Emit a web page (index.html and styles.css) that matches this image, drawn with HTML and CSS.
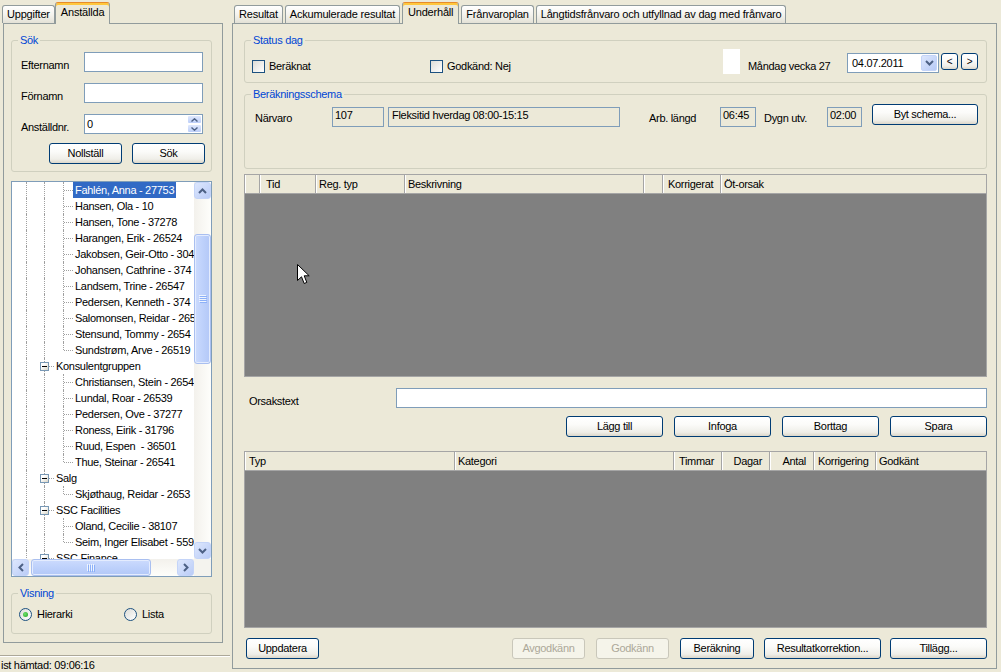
FILE: index.html
```html
<!DOCTYPE html>
<html lang="sv">
<head>
<meta charset="utf-8">
<title>Underhåll</title>
<link rel="stylesheet" href="styles.css">
</head>
<body>
<div class="app">
  <div class="left">
    <div class="tabs">
      <div class="tab">Uppgifter</div>
      <div class="tab active">Anställda</div>
    </div>
    <div class="page lpage">
      <fieldset class="group sok">
        <legend>Sök</legend>
        <div class="frow"><span class="flabel">Efternamn</span><div class="tb"></div></div>
        <div class="frow"><span class="flabel">Förnamn</span><div class="tb"></div></div>
        <div class="frow"><span class="flabel">Anställdnr.</span>
          <div class="tb num"><span class="numval">0</span>
            <span class="spin">
              <span class="sb"><svg width="7" height="4" viewBox="0 0 7 4"><path d="M0.5 3.5 L3.5 0.8 L6.5 3.5" stroke="#4D6185" stroke-width="1.4" fill="none"/></svg></span>
              <span class="sb"><svg width="7" height="4" viewBox="0 0 7 4"><path d="M0.5 0.5 L3.5 3.2 L6.5 0.5" stroke="#4D6185" stroke-width="1.4" fill="none"/></svg></span>
            </span>
          </div>
        </div>
        <div class="brow"><button class="btn w73">Nollställ</button><button class="btn w73">Sök</button></div>
      </fieldset>

      <div class="tree">
        <div class="tree-main">
          <div class="tree-items">
            <div class="ti"><span class="c c1 v"></span><span class="c v"></span><span class="c t"></span><span class="tx sel">Fahlén, Anna - 27753</span></div>
            <div class="ti"><span class="c c1 v"></span><span class="c v"></span><span class="c t"></span><span class="tx">Hansen, Ola - 10</span></div>
            <div class="ti"><span class="c c1 v"></span><span class="c v"></span><span class="c t"></span><span class="tx">Hansen, Tone - 37278</span></div>
            <div class="ti"><span class="c c1 v"></span><span class="c v"></span><span class="c t"></span><span class="tx">Harangen, Erik - 26524</span></div>
            <div class="ti"><span class="c c1 v"></span><span class="c v"></span><span class="c t"></span><span class="tx">Jakobsen, Geir-Otto - 304</span></div>
            <div class="ti"><span class="c c1 v"></span><span class="c v"></span><span class="c t"></span><span class="tx">Johansen, Cathrine - 374</span></div>
            <div class="ti"><span class="c c1 v"></span><span class="c v"></span><span class="c t"></span><span class="tx">Landsem, Trine - 26547</span></div>
            <div class="ti"><span class="c c1 v"></span><span class="c v"></span><span class="c t"></span><span class="tx">Pedersen, Kenneth - 374</span></div>
            <div class="ti"><span class="c c1 v"></span><span class="c v"></span><span class="c t"></span><span class="tx">Salomonsen, Reidar - 265</span></div>
            <div class="ti"><span class="c c1 v"></span><span class="c v"></span><span class="c t"></span><span class="tx">Stensund, Tommy - 2654</span></div>
            <div class="ti"><span class="c c1 v"></span><span class="c v"></span><span class="c l"></span><span class="tx">Sundstrøm, Arve - 26519</span></div>
            <div class="ti"><span class="c c1 v"></span><span class="c g"><span class="box"></span></span><span class="tx">Konsulentgruppen</span></div>
            <div class="ti"><span class="c c1 v"></span><span class="c v"></span><span class="c t"></span><span class="tx">Christiansen, Stein - 2654</span></div>
            <div class="ti"><span class="c c1 v"></span><span class="c v"></span><span class="c t"></span><span class="tx">Lundal, Roar - 26539</span></div>
            <div class="ti"><span class="c c1 v"></span><span class="c v"></span><span class="c t"></span><span class="tx">Pedersen, Ove - 37277</span></div>
            <div class="ti"><span class="c c1 v"></span><span class="c v"></span><span class="c t"></span><span class="tx">Roness, Eirik - 31796</span></div>
            <div class="ti"><span class="c c1 v"></span><span class="c v"></span><span class="c t"></span><span class="tx">Ruud, Espen  - 36501</span></div>
            <div class="ti"><span class="c c1 v"></span><span class="c v"></span><span class="c l"></span><span class="tx">Thue, Steinar - 26541</span></div>
            <div class="ti"><span class="c c1 v"></span><span class="c g"><span class="box"></span></span><span class="tx">Salg</span></div>
            <div class="ti"><span class="c c1 v"></span><span class="c v"></span><span class="c l"></span><span class="tx">Skjøthaug, Reidar - 2653</span></div>
            <div class="ti"><span class="c c1 v"></span><span class="c g"><span class="box"></span></span><span class="tx">SSC Facilities</span></div>
            <div class="ti"><span class="c c1 v"></span><span class="c v"></span><span class="c t"></span><span class="tx">Oland, Cecilie - 38107</span></div>
            <div class="ti"><span class="c c1 v"></span><span class="c v"></span><span class="c l"></span><span class="tx">Seim, Inger Elisabet - 559</span></div>
            <div class="ti"><span class="c c1 v"></span><span class="c g"><span class="box"></span></span><span class="tx">SSC Finance</span></div>
          </div>
          <div class="vscroll">
            <span class="sbtn"><svg width="9" height="6" viewBox="0 0 9 6"><path d="M1 5 L4.5 1.5 L8 5" stroke="#4D6185" stroke-width="2" fill="none"/></svg></span>
            <div class="vtrack">
              <div class="vthumb"><svg width="8" height="8" viewBox="0 0 8 8"><path d="M0 0.5H7M0 2.5H7M0 4.5H7M0 6.5H7" stroke="#EEF4FE" stroke-width="1"/><path d="M1 1.5H8M1 3.5H8M1 5.5H8M1 7.5H8" stroke="#8CB0F8" stroke-width="1"/></svg></div>
            </div>
            <span class="sbtn"><svg width="9" height="6" viewBox="0 0 9 6"><path d="M1 1 L4.5 4.5 L8 1" stroke="#4D6185" stroke-width="2" fill="none"/></svg></span>
          </div>
        </div>
        <div class="hscroll">
          <span class="sbtn"><svg width="6" height="9" viewBox="0 0 6 9"><path d="M5 1 L1.5 4.5 L5 8" stroke="#4D6185" stroke-width="2" fill="none"/></svg></span>
          <div class="htrack">
            <div class="hthumb"><svg width="8" height="8" viewBox="0 0 8 8"><path d="M0.5 0V7M2.5 0V7M4.5 0V7M6.5 0V7" stroke="#EEF4FE" stroke-width="1"/><path d="M1.5 1V8M3.5 1V8M5.5 1V8M7.5 1V8" stroke="#8CB0F8" stroke-width="1"/></svg></div>
          </div>
          <span class="sbtn"><svg width="6" height="9" viewBox="0 0 6 9"><path d="M1 1 L4.5 4.5 L1 8" stroke="#4D6185" stroke-width="2" fill="none"/></svg></span>
          <span class="corner"></span>
        </div>
      </div>

      <fieldset class="group visning">
        <legend>Visning</legend>
        <div class="rrow">
          <span class="ropt hier"><span class="radio on"></span>Hierarki</span>
          <span class="ropt"><span class="radio"></span>Lista</span>
        </div>
      </fieldset>
    </div>
    <div class="status">ist hämtad: 09:06:16</div>
  </div>

  <div class="right">
    <div class="tabs rtabs">
      <div class="tab">Resultat</div>
      <div class="tab">Ackumulerade resultat</div>
      <div class="tab active">Underhåll</div>
      <div class="tab">Frånvaroplan</div>
      <div class="tab">Långtidsfrånvaro och utfyllnad av dag med frånvaro</div>
    </div>
    <div class="page rpage">
      <fieldset class="group sd">
        <legend>Status dag</legend>
        <div class="sdrow">
          <span class="chk first"><span class="cb"></span>Beräknat</span>
          <span class="chk"><span class="cb"></span>Godkänd: Nej</span>
          <span class="colorbox"></span>
          <span class="daylabel">Måndag vecka 27</span>
          <span class="combo"><span class="cval">04.07.2011</span><span class="dd"><svg width="9" height="6" viewBox="0 0 9 6"><path d="M1 1 L4.5 4.5 L8 1" stroke="#4D6185" stroke-width="2" fill="none"/></svg></span></span>
          <button class="btn nav">&lt;</button>
          <button class="btn nav nav2">&gt;</button>
        </div>
      </fieldset>

      <fieldset class="group schema">
        <legend>Beräkningsschema</legend>
        <div class="scrow">
          <span class="slabel s-narvaro">Närvaro</span>
          <span class="ro w52">107</span>
          <span class="ro w232">Fleksitid hverdag 08:00-15:15</span>
          <span class="slabel s-arb">Arb. längd</span>
          <span class="ro w36">06:45</span>
          <span class="slabel s-dygn">Dygn utv.</span>
          <span class="ro w35">02:00</span>
          <button class="btn byt">Byt schema...</button>
        </div>
      </fieldset>

      <div class="grid g1">
        <div class="gh">
          <span class="hc rh"></span>
          <span class="hc h-tid">Tid</span>
          <span class="hc h-reg">Reg. typ</span>
          <span class="hc h-besk">Beskrivning</span>
          <span class="hc h-blank"></span>
          <span class="hc h-korr">Korrigerat</span>
          <span class="hc fill">Öt-orsak</span>
        </div>
        <svg class="cursor" width="13" height="21" viewBox="0 0 13 21"><path d="M0.5 0.5 V16.5 L4.5 12.8 L7.2 19.5 L9.8 18.4 L7.2 11.8 H12.2 Z" fill="#FFFFFF" stroke="#000000" stroke-width="1" stroke-linejoin="miter"/></svg>
      </div>

      <div class="orow">
        <span class="olabel">Orsakstext</span>
        <span class="oinput"></span>
      </div>

      <div class="arow">
        <button class="btn">Lägg till</button>
        <button class="btn">Infoga</button>
        <button class="btn">Borttag</button>
        <button class="btn">Spara</button>
      </div>

      <div class="grid g2">
        <div class="gh">
          <span class="hc h-typ">Typ</span>
          <span class="hc h-kat">Kategori</span>
          <span class="hc h-tim num">Timmar</span>
          <span class="hc h-dag num">Dagar</span>
          <span class="hc h-ant num">Antal</span>
          <span class="hc h-kor">Korrigering</span>
          <span class="hc fill">Godkänt</span>
        </div>
      </div>

      <div class="brow2">
        <button class="btn b-upd">Uppdatera</button>
        <button class="btn dis b-avg">Avgodkänn</button>
        <button class="btn dis b-god">Godkänn</button>
        <button class="btn b-ber">Beräkning</button>
        <button class="btn b-res">Resultatkorrektion...</button>
        <button class="btn b-til">Tillägg...</button>
      </div>
    </div>
  </div>
</div>
</body>
</html>
```

FILE: styles.css
```css
* { box-sizing: border-box; }
html, body { margin: 0; padding: 0; }
body {
  width: 1001px;
  height: 672px;
  overflow: hidden;
  background: #ECE9D8;
  font-family: "Liberation Sans", Arial, sans-serif;
  font-size: 11px;
  line-height: 13px;
  letter-spacing: -0.3px;
  color: #000;
}
button { font: inherit; letter-spacing: inherit; color: inherit; margin: 0; padding: 0; }

.app { display: flex; height: 672px; }
.left { width: 230px; flex: none; display: flex; flex-direction: column; }
.right { flex: 1; min-width: 0; padding: 0 4px 0 2px; display: flex; flex-direction: column; }

/* ---------- tabs ---------- */
.tabs { height: 23px; display: flex; align-items: flex-end; padding-left: 2px; position: relative; z-index: 1; flex: none; }
.tab {
  height: 18px;
  padding: 0 4px;
  border: 1px solid #919B9C;
  border-bottom: 0;
  border-radius: 3px 3px 0 0;
  background: linear-gradient(#FFFFFF, #F4F3EE 50%, #E3E1D6);
  display: flex;
  align-items: center;
  white-space: nowrap;
  flex: none;
  letter-spacing: -0.2px;
}
.rtabs .tab { margin-right: 2px; }
.tab.active {
  height: 22px;
  margin-bottom: -1px;
  background: #ECE9D8;
  border-top: 1px solid #E68B2C;
  box-shadow: inset 0 2px 0 #FFC73C;
  padding: 0 5px 2px;
}

.page { background: #ECE9D8; border: 1px solid #919B9C; flex: none; }
.lpage { width: 220px; height: 620px; margin-left: 3px; padding: 10px 10px 0 7px; }
.rpage { height: 646px; padding: 10px 9px 9px 11px; display: flex; flex-direction: column; }

/* ---------- group boxes ---------- */
.group { margin: 0; padding: 0; border: 1px solid #D0D0BF; border-radius: 3px; min-width: 0; }
.group legend { color: #0046D5; padding: 0 2px; line-height: 13px; }

/* ---------- search ---------- */
.sok { padding: 5px 8px 7px 9px; }
.sok legend { margin-left: -3px; }
.frow { display: flex; align-items: flex-end; height: 20px; }
.frow + .frow { margin-top: 11px; }
.flabel { width: 63px; flex: none; }
.tb { width: 119px; height: 20px; border: 1px solid #7F9DB9; background: #FFFFFF; flex: none; }
.tb.num { display: flex; align-items: center; padding-left: 2px; }
.spin { margin-left: auto; width: 15px; height: 18px; display: flex; flex-direction: column; }
.sb {
  flex: 1;
  display: flex; align-items: center; justify-content: center;
  background: linear-gradient(#DFE8FD, #BCCEF8);
  border: 1px solid #FFFFFF;
  border-radius: 2px;
}
.brow { display: flex; justify-content: flex-end; gap: 10px; margin-top: 9px; margin-right: -2px; }
.w73 { width: 73px; }

/* ---------- buttons ---------- */
.btn {
  height: 21px;
  border: 1px solid #003C74;
  border-radius: 3px;
  background: linear-gradient(#FFFFFF 0%, #FBFBF9 40%, #EFEEE8 80%, #DCD7CA 100%);
  display: flex; align-items: center; justify-content: center;
  white-space: nowrap;
  flex: none;
}
.btn.dis { border-color: #C9C7BA; color: #ACA899; background: #F5F4EA; }

/* ---------- tree ---------- */
.tree { margin-top: 9px; height: 396px; border: 1px solid #7F9DB9; background: #FFFFFF; display: flex; flex-direction: column; }
.tree-main { display: flex; height: 377px; flex: none; }
.tree-items { flex: 1; min-width: 0; overflow: hidden; }
.ti { display: flex; height: 16px; padding-left: 5px; white-space: nowrap; }
.c { flex: none; width: 19px; height: 16px; position: relative; }
.c1 { width: 18px; }
.c.v::before, .c.t::before, .c.l::before, .c.g::before {
  content: ""; position: absolute; left: 9px; top: 0; bottom: 0; border-left: 1px dotted #A0A0A0;
}
.c.l::before { bottom: 8px; }
.c.t::after, .c.l::after, .c.g::after {
  content: ""; position: absolute; left: 10px; right: 0; top: 8px; border-top: 1px dotted #A0A0A0;
}
.c.g::after { left: 14px; }
.box {
  position: absolute; left: 5px; top: 4px; width: 9px; height: 9px;
  border: 1px solid #7898B5;
  background: linear-gradient(135deg, #FFFFFF 30%, #D9D5C6);
  z-index: 1;
}
.box::after { content: ""; position: absolute; left: 1px; top: 3px; width: 5px; height: 1px; background: #000; }
.tx { padding: 0 2px; line-height: 16px; white-space: pre; }
.tx.sel { background: #316AC5; color: #FFFFFF; }

.sbtn {
  width: 17px; height: 17px; flex: none;
  border: 1px solid #C4D4F8;
  border-radius: 3px;
  background: linear-gradient(135deg, #DDE7FD, #BACCF7);
  display: flex; align-items: center; justify-content: center;
}
.vscroll { width: 17px; flex: none; background: linear-gradient(90deg, #F3F1EC, #FEFEFB); display: flex; flex-direction: column; }
.vtrack { flex: 1; padding-top: 35px; }
.vthumb {
  height: 130px;
  border: 1px solid #A9BFF0;
  border-radius: 3px;
  background: linear-gradient(90deg, #CCDBFD, #BED1FB 50%, #B3C8F7);
  box-shadow: inset 0 0 0 1px #E4ECFE;
  display: flex; align-items: center; justify-content: center;
}
.hscroll { height: 17px; flex: none; display: flex; background: linear-gradient(#F3F1EC, #FEFEFB); }
.htrack { flex: 1; padding-left: 2px; }
.hthumb {
  width: 120px; height: 17px;
  border: 1px solid #A9BFF0;
  border-radius: 3px;
  background: linear-gradient(#CCDBFD, #BED1FB 50%, #B3C8F7);
  box-shadow: inset 0 0 0 1px #E4ECFE;
  display: flex; align-items: center; justify-content: center;
}
.corner { width: 17px; height: 17px; flex: none; background: #F4F3EE; }

/* ---------- visning ---------- */
.visning { margin-top: 10px; padding: 8px 7px 12px 7px; }
.visning legend { margin-left: -1px; }
.rrow { display: flex; align-items: center; height: 13px; }
.ropt { display: flex; align-items: center; }
.ropt.hier { width: 105px; }
.radio {
  width: 13px; height: 13px; flex: none;
  border-radius: 50%;
  border: 1px solid #1C5180;
  background: linear-gradient(135deg, #DCDCD7, #FFFFFF);
  margin-right: 5px;
  position: relative;
}
.radio.on::after {
  content: ""; position: absolute; left: 3px; top: 3px; width: 5px; height: 5px; border-radius: 50%;
  background: radial-gradient(circle at 40% 40%, #6EE06A, #21A121);
}

.status {
  margin-top: 12px;
  border-top: 1px solid #ACA899;
  box-shadow: inset 0 1px 0 #FFFFFF;
  padding: 3px 0 0 1px;
  white-space: nowrap;
}

/* ---------- status dag ---------- */
.sd { padding: 0 8px 8px 7px; }
.sd legend { margin-left: -1px; }
.sdrow { display: flex; align-items: flex-start; height: 27px; }
.chk { display: flex; align-items: flex-start; margin-top: 13px; }
.chk.first { width: 178px; }
.cb {
  width: 13px; height: 13px; flex: none;
  border: 1px solid #1C5180;
  background: linear-gradient(135deg, #DCDCD7, #FFFFFF);
  margin-right: 4px;
}
.colorbox { margin-left: auto; margin-top: 2px; width: 17px; height: 25px; background: #FFFFFF; flex: none; }
.daylabel { width: 99px; margin-left: 8px; margin-top: 13px; flex: none; }
.combo {
  margin-top: 6px; width: 92px; height: 20px; flex: none;
  border: 1px solid #7F9DB9; background: #FFFFFF;
  display: flex; align-items: center; padding: 0 1px 0 4px;
}
.dd {
  margin-left: auto; width: 16px; height: 16px;
  border: 1px solid #C4D4F8; border-radius: 2px;
  background: linear-gradient(135deg, #DDE7FD, #B7CAF6);
  display: flex; align-items: center; justify-content: center;
}
.nav { margin-top: 6px; width: 17px; height: 17px; margin-left: 2px; font-size: 10px; }
.nav2 { margin-left: 3px; }

/* ---------- schema ---------- */
.schema { margin-top: 5px; padding: 0 7px 41px 10px; }
.schema legend { margin-left: -4px; }
.scrow { display: flex; align-items: flex-start; height: 26px; }
.slabel { margin-top: 11px; flex: none; white-space: nowrap; }
.s-narvaro { width: 77px; }
.s-arb { margin-left: 29px; width: 71px; }
.s-dygn { margin-left: 8px; width: 63px; }
.ro {
  margin-top: 6px; height: 20px; flex: none;
  border: 1px solid #7F9DB9;
  padding: 0 2px;
  line-height: 14px;
  white-space: nowrap;
}
.w52 { width: 52px; }
.w232 { width: 232px; margin-left: 4px; padding-left: 3px; }
.w36 { width: 36px; }
.w35 { width: 35px; }
.byt { margin-left: 10px; margin-top: 3px; width: 106px; }

/* ---------- grids ---------- */
.grid { border: 1px solid #A5A5A5; background: #808080; display: flex; flex-direction: column; position: relative; }
.g1 { margin-top: 5px; height: 203px; flex: none; }
.g2 { margin-top: 14px; flex: 1; }
.gh { display: flex; height: 19px; background: #ECE9D8; border-bottom: 1px solid #A5A5A5; flex: none; }
.hc {
  flex: none;
  border-right: 1px solid #A5A5A5;
  box-shadow: inset 1px 0 0 #FFFFFF;
  padding-left: 3px;
  line-height: 18px;
  white-space: nowrap;
  overflow: hidden;
}
.hc.fill { flex: 1; border-right: 0; }
.hc.num { text-align: right; padding: 0 7px 0 0; }
.rh { width: 15px; }
.h-tid { width: 56px; padding-left: 6px; }
.h-reg { width: 89px; }
.h-besk { width: 239px; }
.h-blank { width: 19px; }
.h-korr { width: 58px; padding-left: 5px; }
.h-typ { width: 210px; padding-left: 4px; }
.h-kat { width: 219px; }
.h-tim { width: 48px; }
.h-dag { width: 48px; }
.h-ant { width: 44px; }
.h-kor { width: 62px; padding-left: 4px; }
.cursor { position: absolute; left: 52px; top: 89px; }

.orow { display: flex; align-items: flex-end; height: 20px; margin-top: 11px; flex: none; }
.olabel { width: 152px; padding-left: 5px; flex: none; }
.oinput { flex: 1; height: 20px; border: 1px solid #7F9DB9; background: #FFFFFF; }

.arow { display: flex; justify-content: flex-end; gap: 11px; margin-top: 8px; flex: none; }
.arow .btn { width: 97px; }

.brow2 { display: flex; margin-top: 10px; flex: none; padding-left: 2px; }
.b-upd { width: 73px; }
.b-avg { width: 73px; margin-left: auto; }
.b-god { width: 73px; margin-left: 11px; }
.b-ber { width: 74px; margin-left: 11px; }
.b-res { width: 117px; margin-left: 10px; }
.b-til { width: 97px; margin-left: 9px; }
```
